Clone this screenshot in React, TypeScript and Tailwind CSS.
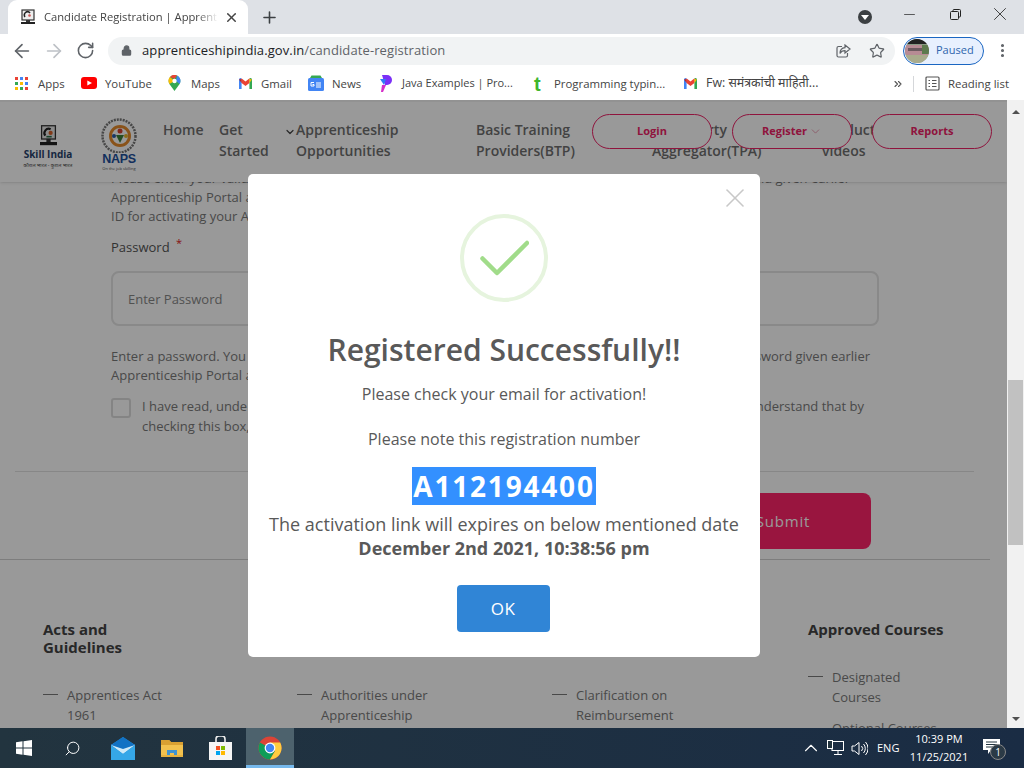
import React from "react";
import { ArrowLeft, ArrowRight, RotateCw, Star, X, Plus, ChevronDown, ChevronUp, ChevronsRight, Search, Lock, Minus, EllipsisVertical } from "lucide-react";

const SkillMark = ({ s = 16 }: { s?: number }) => (
  <svg width={s} height={s * 1.25} viewBox="0 0 16 20">
    <rect x="1.500" y="0.700" width="13" height="12.500" fill="#e8e8e8" stroke="#333" strokeWidth="1.200" />
    <path d="M5 10a4 4 0 0 1 5-6" stroke="#222" strokeWidth="2" fill="none" />
    <circle cx="10" cy="7.500" r="2" fill="#d8622a" />
    <path d="M6 11h5" stroke="#2c6e49" strokeWidth="1.500" />
    <rect x="6" y="13" width="4" height="3" fill="#333" />
    <rect x="0" y="16" width="16" height="3" fill="#222" />
  </svg>
);

const Favicon = () => (
  <svg width="14" height="16" viewBox="0 0 14 16">
    <rect x="1" y="1" width="12" height="10" fill="#eee" stroke="#333" strokeWidth="1.200" />
    <path d="M4 8a3.200 3.200 0 0 1 5-4" stroke="#222" strokeWidth="1.600" fill="none" />
    <circle cx="8.500" cy="6.500" r="1.300" fill="#c55" />
    <rect x="5" y="11" width="4" height="2" fill="#333" />
    <rect x="0" y="13" width="14" height="2" fill="#222" />
  </svg>
);

const GmailIcon = () => (
  <svg width="15" height="12" viewBox="0 0 15 12">
    <path d="M1 12V2l6.500 5L14 2v10h-2.600V6L7.500 9 3.600 6v6z" fill="#fff" />
    <path d="M1 12V2.500a1.500 1.500 0 0 1 2.400-1.200L3.600 6v6z" fill="#4285f4" />
    <path d="M14 12V2.500a1.500 1.500 0 0 0-2.400-1.200L11.400 6v6z" fill="#34a853" />
    <path d="M3.400 1.300 7.500 4.500 11.600 1.300 11.400 6 7.500 9 3.600 6z" fill="#ea4335" />
    <path d="M1 2.500 3.600 6V2z" fill="#c5221f" />
    <path d="M14 2.500 11.400 6V2z" fill="#fbbc04" />
  </svg>
);

const ChromeLogo = () => (
  <svg width="24" height="24" viewBox="0 0 24 24">
    <circle cx="12" cy="12" r="11.500" fill="#db4437" />
    <path d="M12 12 1.900 6.500A11.500 11.500 0 0 0 12 23.500l5-8.500z" fill="#0f9d58" />
    <path d="M12 6.500h10.200A11.500 11.500 0 0 1 12 23.500L17 15z" fill="#ffcd40" />
    <circle cx="12" cy="12" r="5.400" fill="#fff" />
    <circle cx="12" cy="12" r="4.200" fill="#4285f4" />
  </svg>
);

const bookmarkText = "text-[11.400px] text-[#444] whitespace-nowrap";

const Bookmarks = () => (
  <div className="h-[33px] bg-white flex items-center pl-[15px] font-['Open_Sans',sans-serif]">
    <div className="w-[66px] flex items-center gap-[10px]">
      <svg width="13" height="13" viewBox="0 0 13 13">
        {[0, 5, 10].map((y, r) =>
          [0, 5, 10].map((x, c) => (
            <rect key={`${r}${c}`} x={x} y={y} width="3" height="3" fill={["#ea4335", "#4285f4", "#ea4335", "#34a853", "#fbbc04", "#4285f4", "#fbbc04", "#34a853", "#ea4335"][r * 3 + c]} />
          ))
        )}
      </svg>
      <span className={bookmarkText}>Apps</span>
    </div>
    <div className="w-[87px] flex items-center gap-[8px]">
      <svg width="16" height="12" viewBox="0 0 16 12">
        <rect width="16" height="12" rx="3" fill="#f00" />
        <path d="M6.300 3.400 11 6l-4.700 2.600z" fill="#fff" />
      </svg>
      <span className={bookmarkText}>YouTube</span>
    </div>
    <div className="w-[70px] flex items-center gap-[10px]">
      <svg width="13" height="16" viewBox="0 0 13 16">
        <path d="M6.500 0A6 6 0 0 1 11.600 9L6.500 16 1.400 9A6 6 0 0 1 6.500 0z" fill="#34a853" />
        <path d="M1.400 9A6 6 0 0 1 2 2l4.500 4z" fill="#fbbc04" />
        <path d="M2 2A6 6 0 0 1 9 .5L6.500 4z" fill="#ea4335" />
        <path d="M9 .5A6 6 0 0 1 11.600 9L8 6z" fill="#4285f4" />
        <circle cx="6.500" cy="6" r="2.200" fill="#fff" />
      </svg>
      <span className={bookmarkText}>Maps</span>
    </div>
    <div className="w-[70px] flex items-center gap-[8px]">
      <GmailIcon />
      <span className={bookmarkText}>Gmail</span>
    </div>
    <div className="w-[72px] flex items-center gap-[8px]">
      <svg width="16" height="16" viewBox="0 0 16 16">
        <path d="M2 3 3.500.5h9L14 3z" fill="#34a853" />
        <rect y="3" width="16" height="13" rx="1.500" fill="#4285f4" />
        <path d="M6 7.500H3v3.500h3V9.500H4.500M8 8h5M8 10h5M8 12h5" stroke="#fff" strokeWidth="1" fill="none" />
      </svg>
      <span className={bookmarkText}>News</span>
    </div>
    <div className="w-[153px] flex items-center gap-[10px]">
      <svg width="12" height="17" viewBox="0 0 12 17">
        <path d="M2 0h5a5 5 0 0 1 0 10H5z" fill="#7b2ff7" />
        <path d="M0 4h6l-2 6z" fill="#2f7bf7" />
        <path d="M2 10h4L3 17H1z" fill="#d62fc9" />
      </svg>
      <span className="text-[11px] text-[#444] whitespace-nowrap">Java Examples | Pro...</span>
    </div>
    <div className="w-[150px] flex items-center gap-[13px] pl-[1px]">
      <span className="font-['Liberation_Sans',sans-serif] text-[20px] leading-[20px] font-bold text-[#3fb62c] w-[7px]">t</span>
      <span className={bookmarkText}>Programming typin...</span>
    </div>
    <div className="w-[209px] flex items-center gap-[8px]">
      <GmailIcon />
      <span className="text-[12.400px] text-[#444] whitespace-nowrap font-['Open_Sans','Noto_Sans','Noto_Sans_Devanagari',sans-serif]">Fw: समंत्रकांची माहिती...</span>
    </div>
    <ChevronsRight size={12} strokeWidth={2.200} className="text-[#555]" />
    <div className="w-px h-[16px] bg-[#d5d7da] ml-[9px]" />
    <svg className="ml-[11px]" width="15" height="15" viewBox="0 0 15 15" fill="none" stroke="#555" strokeWidth="1.200">
      <rect x="1" y="1" width="13" height="13" rx="1" />
      <path d="M3.500 4.500h1.500M3.500 7.500h1.500M3.500 10.500h1.500M7 4.500h4.500M7 7.500h4.500M7 10.500h4.500" />
    </svg>
    <span className={`${bookmarkText} ml-[8px]`}>Reading list</span>
  </div>
);

const TopChrome = () => (
  <div className="font-['Open_Sans',sans-serif]">
    <div className="h-[34px] bg-[#dee1e6] flex items-end">
      <div className="ml-[8px] w-[240px] h-[34px] bg-white rounded-t-[9px] flex items-center pl-[13px]">
        <Favicon />
        <div className="ml-[9px] w-[174px] overflow-hidden whitespace-nowrap text-[11.200px] text-[#444] [mask-image:linear-gradient(to_right,black_88%,transparent)]">Candidate Registration | Apprenticeship India</div>
        <X size={15} strokeWidth={2.400} className="ml-[6px] text-[#444]" />
      </div>
      <div className="h-[34px] flex items-center ml-[12px]">
        <Plus size={19} strokeWidth={2} className="text-[#3c4043]" />
      </div>
      <div className="flex-1" />
      <div className="h-[34px] flex items-center">
        <div className="w-[14px] h-[14px] rounded-full bg-[#3c4043] flex items-center justify-center">
          <div className="w-0 h-0 border-l-[4px] border-r-[4px] border-t-[5px] border-l-transparent border-r-transparent border-t-white" />
        </div>
        <Minus size={17} strokeWidth={1} className="ml-[29px] -mt-[6px] text-[#222]" />
        <svg className="ml-[32px] -mt-[6px]" width="11" height="11" viewBox="0 0 11 11" fill="none" stroke="#222" strokeWidth="1">
          <rect x="0.500" y="2.500" width="8" height="8" rx="1" />
          <path d="M3 2.500V1.500a1 1 0 0 1 1-1h5.500a1 1 0 0 1 1 1V7a1 1 0 0 1-1 1H8.500" />
        </svg>
        <X size={22} strokeWidth={0.900} className="ml-[28px] mr-[13px] -mt-[6px] text-[#222]" />
      </div>
    </div>
    <div className="h-[33px] bg-white flex items-center">
      <ArrowLeft size={22} strokeWidth={1.800} className="ml-[11px] text-[#5f6368]" />
      <ArrowRight size={22} strokeWidth={1.800} className="ml-[10px] text-[#bdc1c6]" />
      <RotateCw size={19} strokeWidth={2} className="ml-[11px] text-[#5f6368]" />
      <div className="ml-[13px] w-[787px] h-[28px] rounded-full bg-[#f1f3f4] flex items-center pl-[13px]">
        <Lock size={11} strokeWidth={2.600} className="text-[#5f6368] fill-[#5f6368]" />
        <div className="ml-[10px] text-[13px] tracking-[0.100px] text-[#5f6368] whitespace-nowrap">
          <span className="text-[#202124]">apprenticeshipindia.gov.in</span>/candidate-registration
        </div>
        <div className="flex-1" />
        <svg width="15" height="14" viewBox="0 0 15 14" fill="none" stroke="#5f6368" strokeWidth="1.200">
          <path d="M6 2.500H2.500a1.500 1.500 0 0 0-1.500 1.500v7.500A1.500 1.500 0 0 0 2.500 13H10a1.500 1.500 0 0 0 1.500-1.500V9" />
          <path d="M9 1l5 4-5 4V6.700C6.500 6.700 5 7.500 4 9.500c0-3.500 2-5.500 5-5.800z" />
        </svg>
        <Star size={16} strokeWidth={1.800} className="ml-[18px] mr-[10px] text-[#5f6368]" />
      </div>
      <div className="ml-[8px] w-[81px] h-[28px] rounded-full border border-[#1a66c2] bg-[#e8f0fe] flex items-center pl-[1px]">
        <svg width="24" height="24" viewBox="0 0 24 24" className="rounded-full">
          <rect width="24" height="24" fill="#8b9a86" />
          <rect width="24" height="5" fill="#222" />
          <rect y="6" width="24" height="10" fill="#b78b94" />
          <rect x="3" y="9" width="17" height="3" fill="#6d5a60" />
          <rect x="17" y="6" width="7" height="9" fill="#5d7a4e" />
          <rect y="16" width="24" height="8" fill="#a9ab8c" />
        </svg>
        <span className="ml-[7px] text-[11px] text-[#2f65ad]">Paused</span>
      </div>
      <EllipsisVertical size={17} strokeWidth={2.400} className="ml-[10px] text-[#5f6368]" />
    </div>
    <Bookmarks />
  </div>
);

const Nav = () => (
  <div className="relative z-10 h-[82px] bg-white border-t-2 border-t-[#f4f4f4] shadow-sm flex items-start">
    <div className="w-[97px] pl-[24px] pt-[23px]">
      <div className="w-[48px] flex flex-col items-center">
        <SkillMark s={17} />
        <div className="font-['Open_Sans',sans-serif] font-bold text-[10px] leading-[11px] text-[#27426b] whitespace-nowrap mt-[3px]">Skill India</div>
        <div className="font-['Noto_Sans','Noto_Sans_Devanagari',sans-serif] text-[5px] leading-[8px] text-[#444] whitespace-nowrap mt-[1px]">कौशल भारत - कुशल भारत</div>
      </div>
    </div>
    <div className="w-[66px] pt-[16px]">
      <div className="w-[44px] flex flex-col items-center">
        <svg width="44" height="35" viewBox="0 0 44 35">
          <circle cx="22" cy="18" r="16.500" fill="none" stroke="#777" strokeWidth="2.500" strokeDasharray="2 1" />
          <circle cx="23" cy="18" r="9.500" fill="none" stroke="#e58b2c" strokeWidth="3" />
          <circle cx="23" cy="13" r="2.500" fill="#d9432f" />
          <path d="M19 17l4 8 4-8z" fill="#3f7f3a" />
          <circle cx="17" cy="18" r="2" fill="#2a5aa8" />
          <circle cx="29" cy="18" r="2" fill="#e5b52c" />
        </svg>
        <div className="font-['Liberation_Sans',sans-serif] font-bold text-[12.500px] leading-[12px] text-[#1d4f9c] tracking-[-0.300px]">NAPS</div>
        <div className="text-[4px] leading-[5px] text-[#555] whitespace-nowrap mt-[1px]">On the job skilling</div>
      </div>
    </div>
    <div className="flex pt-[17px] text-[14px] leading-[21px] text-[#6f6f6f] font-semibold">
      <div className="w-[56px]">Home</div>
      <div className="w-[66px]">Get<br />Started</div>
      <div className="w-[11px] pt-[7px] -ml-[1px] mr-[1px]"><ChevronDown size={12} strokeWidth={2.400} className="text-[#444]" /></div>
      <div className="w-[180px]">Apprenticeship<br />Opportunities</div>
      <div className="w-[176px]">Basic Training<br />Providers(BTP)</div>
      <div className="w-[170px]">Third Party<br />Aggregator(TPA)</div>
      <div>Product<br />videos</div>
    </div>
    <div className="absolute right-[15px] top-[12px] flex gap-[20px] text-[11px] font-bold text-[#ee2266]">
      {["Login", "Register", "Reports"].map((t) => (
        <div key={t} className="w-[120px] h-[35px] rounded-full border border-[#ee2266] bg-white flex items-center justify-center">
          {t}
          {t === "Register" && <ChevronDown size={13} strokeWidth={1.200} className="ml-[2px] text-[#e0708f]" />}
        </div>
      ))}
    </div>
  </div>
);

const FooterCol = ({ title, items, w }: { title: React.ReactNode; items: string[][]; w: string }) => (
  <div className={w}>
    <div className="text-[15px] leading-[18px] font-bold text-[#444] h-[65px]">{title}</div>
    {items.map((lines, i) => (
      <div key={i} className="flex text-[13px] leading-[20px] text-[#7a7a7a]">
        <div className="w-[15px] h-px bg-[#7a7a7a] mt-[9px] mr-[9px]" />
        <div>{lines.map((l) => <div key={l}>{l}</div>)}</div>
      </div>
    ))}
  </div>
);

const PageBody = () => (
  <div className="relative -mt-[13px] pl-[111px] text-[13px] leading-[19px] text-[#7a7a7a] bg-white">
    <div className="pr-[157px] flex justify-between">
      <div>
        <div>Please enter your valid</div>
        <div>Apprenticeship Portal a</div>
        <div>ID for activating your A</div>
      </div>
      <div>nd given earlier</div>
    </div>
    <div className="mt-[11px] text-[#555] leading-[20px]">
      Password <span className="text-[#e02020] text-[11px] align-top relative -top-[4px] ml-[3px]">*</span>
    </div>
    <div className="mt-[14px] w-[768px] h-[55px] rounded-[8px] border-2 border-[#e4e4e4] flex items-center pl-[15px] pt-[2px] text-[13px] text-[#888]">Enter Password</div>
    <div className="mt-[21px] pr-[137px] flex justify-between">
      <div>
        <div>Enter a password. You</div>
        <div>Apprenticeship Portal a</div>
      </div>
      <div>sword given earlier</div>
    </div>
    <div className="mt-[11px] pr-[143px] flex">
      <div className="w-[20px] h-[20px] rounded-[3px] border-2 border-[#ddd] mr-[11px] mt-[2px]" />
      <div className="flex-1 leading-[20px]">
        <div className="flex justify-between"><span>I have read, unde</span><span>nderstand that by</span></div>
        <div>checking this box,</div>
      </div>
    </div>
    <div className="mt-[35px] -ml-[96px] w-[959px] h-px bg-[#e2e2e2]" />
    <div className="mt-[21px] h-[56px] pr-[136px] flex justify-end">
      <div className="w-[160px] h-[56px] rounded-[8px] bg-[#ff2369] text-white text-[15px] tracking-[0.800px] pr-[16px] flex items-center justify-center">Submit</div>
    </div>
    <div className="mt-[10px] -ml-[111px] w-[990px] h-px bg-[#d0d0d0]" />
    <div className="-ml-[111px] pl-[43px] pt-[60px] flex">
      <FooterCol w="w-[254px]" title={<>Acts and<br />Guidelines</>} items={[["Apprentices Act", "1961"]]} />
      <FooterCol w="w-[255px]" title="" items={[["Authorities under", "Apprenticeship"]]} />
      <FooterCol w="w-[256px]" title="" items={[["Clarification on", "Reimbursement"]]} />
      <div>
        <div className="text-[15px] leading-[18px] font-bold text-[#444] h-[47px]">Approved Courses</div>
        <div className="flex text-[13px] leading-[20px] text-[#7a7a7a]">
          <div className="w-[15px] h-px bg-[#7a7a7a] mt-[9px] mr-[9px]" />
          <div>Designated<br />Courses<div className="mt-[11px]">Optional Courses</div></div>
        </div>
      </div>
    </div>
  </div>
);

const Modal = () => (
  <div className="absolute inset-0 z-20 bg-black/40 flex justify-center items-start pt-[74px]">
    <div className="relative ml-px w-[512px] h-[483px] bg-white rounded-[5px] flex flex-col items-center pt-[40px] text-[#595959]">
      <X size={32} strokeWidth={1.200} className="absolute right-[9px] top-[8px] text-[#c8c8c8]" />
      <div className="w-[88px] h-[88px] rounded-full border-[4px] border-[#e6f4de] flex items-center justify-center">
        <svg width="50" height="38" viewBox="0 0 50 38" fill="none" stroke="#a1dc8a" strokeWidth="4.500" strokeLinecap="round" strokeLinejoin="round">
          <path d="M3.500 19.500 18 34 48 4" />
        </svg>
      </div>
      <div className="mt-[28px] text-[30px] leading-[40px] font-semibold whitespace-nowrap">Registered Successfully!!</div>
      <div className="mt-[12px] text-[16px] leading-[24px]">Please check your email for activation!</div>
      <div className="mt-[21px] text-[16px] leading-[24px]">Please note this registration number</div>
      <div className="mt-[16px] h-[38px] px-px bg-[#3390ff] text-white text-[28px] leading-[38px] font-bold tracking-[1.800px]">A112194400</div>
      <div className="mt-[7px] text-[18px] leading-[24px] whitespace-nowrap">The activation link will expires on below mentioned date</div>
      <div className="text-[18px] leading-[24px] font-bold whitespace-nowrap">December 2nd 2021, 10:38:56 pm</div>
      <div className="mt-[25px] -ml-[2px] w-[93px] h-[47px] rounded-[4px] bg-[#3085d6] text-white text-[17px] tracking-[0.500px] flex items-center justify-center">OK</div>
    </div>
  </div>
);

const Scrollbar = () => (
  <div className="w-[17px] bg-[#f1f1f1] flex flex-col items-center justify-between relative pt-[10px] pb-[7px]">
    <div className="w-0 h-0 border-l-[4px] border-r-[4px] border-b-[4px] border-l-transparent border-r-transparent border-b-[#505050]" />
    <div className="absolute left-px right-px top-[280px] h-[165px] bg-[#c1c1c1]" />
    <div className="w-0 h-0 border-l-[4px] border-r-[4px] border-t-[4px] border-l-transparent border-r-transparent border-t-[#505050]" />
  </div>
);

const Taskbar = () => (
  <div className="h-[40px] bg-gradient-to-r from-[#22343f] to-[#1a2c44] flex items-center text-white font-['Open_Sans',sans-serif]">
    <svg className="ml-[16px]" width="16" height="16" viewBox="0 0 16 16" fill="#fff">
      <path d="M0 2.300 6.500 1.300v6.300H0zM7.500 1.200 16 0v7.600H7.500zM0 8.600h6.500v6.200L0 13.800zM7.500 8.600H16V16l-8.500-1.200z" />
    </svg>
    <Search size={17} strokeWidth={1.400} className="ml-[32px] -scale-x-100" />
    <svg className="ml-[30px]" width="24" height="23" viewBox="0 0 24 23">
      <path d="M0 8 12 0l12 8v15H0z" fill="#1f8fd8" />
      <path d="M0 8 12 17 24 8 12 3z" fill="#cfeaf8" />
      <path d="M0 8 12 0l12 8-12 4z" fill="#1272c4" />
      <path d="M0 23V8l12 9 12-9v15z" fill="#35a7e8" />
    </svg>
    <svg className="ml-[26px]" width="22" height="20" viewBox="0 0 22 20">
      <path d="M0 2h8l2 2h12v15H0z" fill="#f2c14e" />
      <path d="M0 2h8l2 2h12v3H0z" fill="#d9a032" />
      <path d="M6 17v-5h10v5h-3v-2H9v2z" fill="#3f93d1" />
      <rect y="17" width="22" height="2" fill="#e6b23f" />
    </svg>
    <svg className="ml-[26px]" width="23" height="24" viewBox="0 0 23 24">
      <path d="M7 7V3a3 3 0 0 1 3-3h3a3 3 0 0 1 3 3v4" fill="none" stroke="#eee" strokeWidth="1.600" />
      <rect y="6" width="23" height="18" fill="#f5f5f5" />
      <rect x="7" y="10" width="4" height="4" fill="#f25022" />
      <rect x="12" y="10" width="4" height="4" fill="#7fba00" />
      <rect x="7" y="15" width="4" height="4" fill="#00a4ef" />
      <rect x="12" y="15" width="4" height="4" fill="#ffb900" />
    </svg>
    <div className="ml-[14px] w-[48px] h-[40px] bg-[#4d626d] border-b-[3px] border-b-[#76b9ed] flex items-center justify-center pt-[3px]">
      <ChromeLogo />
    </div>
    <div className="flex-1" />
    <ChevronUp size={22} strokeWidth={1.200} />
    <svg className="ml-[5px]" width="17" height="16" viewBox="0 0 17 16" fill="none" stroke="#fff" strokeWidth="1">
      <rect x="5" y="1.500" width="11.500" height="9" />
      <rect x="0.500" y="0.500" width="5" height="8" fill="#22343f" />
      <path d="M11 10.500V14M7 14.500h8" />
    </svg>
    <svg className="ml-[7px]" width="17" height="15" viewBox="0 0 17 15" fill="none" stroke="#fff" strokeWidth="1">
      <path d="M1 5h2.500L8 1.500v12L3.500 10H1z" />
      <path d="M10.500 5a3.500 3.500 0 0 1 0 5M12.500 3a6.500 6.500 0 0 1 0 9M14.500 1a9.500 9.500 0 0 1 0 13" />
    </svg>
    <div className="ml-[9px] text-[11px] w-[25px]">ENG</div>
    <div className="ml-[7px] w-[60px] text-center text-[11px] leading-[18px] whitespace-nowrap">
      <div>10:39 PM</div>
      <div>11/25/2021</div>
    </div>
    <div className="relative ml-[14px] mr-[24px] w-[17px] h-[20px]">
      <svg width="17" height="16" viewBox="0 0 17 16" className="absolute left-0 top-px">
        <path d="M0 0h17v11H8l-3 4v-4H0z" fill="#fff" />
        <path d="M3 3h11M3 5.500h11M3 8h7" stroke="#22343f" strokeWidth="1" />
      </svg>
      <div className="absolute left-[7px] top-[6px] w-[16px] h-[16px] rounded-full bg-[#2b3a46] border border-[#888] text-[10px] leading-[14px] text-center">1</div>
    </div>
  </div>
);

export default function App() {
  return (
    <div className="w-[1024px] h-[768px] overflow-hidden flex flex-col bg-white">
      <TopChrome />
      <div className="h-[628px] flex">
        <div className="relative w-[1007px] overflow-hidden bg-white font-['Open_Sans',sans-serif]">
          <Nav />
          <PageBody />
          <Modal />
        </div>
        <Scrollbar />
      </div>
      <Taskbar />
    </div>
  );
}
